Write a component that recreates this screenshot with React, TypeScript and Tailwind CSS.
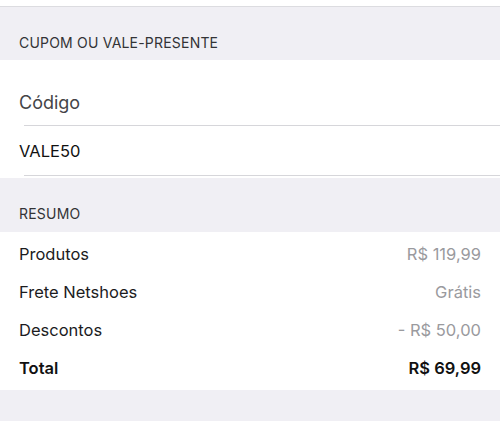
import React from "react";

const font = { fontFamily: "Inter, 'Noto Sans', sans-serif" };

function Row({ label, value, bold }: { label: string; value: string; bold?: boolean }) {
  return (
    <div className="flex h-[38px] items-center justify-between pl-[19px] pr-[19px]">
      <span className={`text-[16.5px] leading-6 ${bold ? "font-semibold text-[#111]" : "text-[#1c1c1e]"}`}>{label}</span>
      <span className={`text-[16.5px] leading-6 ${bold ? "font-semibold text-[#111]" : "text-[#9a9a9e]"}`}>{value}</span>
    </div>
  );
}

export default function App() {
  return (
    <div className="w-[500px] h-[421px] bg-[#f0eff4] overflow-hidden" style={font}>
      <div className="h-[6px] bg-white" />
      <div className="h-px bg-[#dcdce0]" />
      <div className="h-[53px] flex items-end pb-[7px] pl-[19px]">
        <span className="text-[14px] leading-5 text-[#333336] tracking-[0.2px]">CUPOM OU VALE-PRESENTE</span>
      </div>
      <div className="bg-white">
        <div className="h-[65px] flex items-end pb-[10px] pl-[19px]">
          <span className="text-[18px] leading-6 text-[#444447]">Código</span>
        </div>
        <div className="ml-[24px] h-px bg-[#d6d6da]" />
        <div className="h-[49px] flex items-center pl-[19px]">
          <span className="text-[16.5px] leading-6 text-[#111]">VALE50</span>
        </div>
        <div className="ml-[24px] h-px bg-[#d6d6da]" />
        <div className="h-[2px]" />
      </div>
      <div className="h-[54px] flex items-end pb-[8px] pl-[19px]">
        <span className="text-[14px] leading-5 text-[#333336] tracking-[0.2px]">RESUMO</span>
      </div>
      <div className="bg-white py-[3px]">
        <Row label="Produtos" value="R$ 119,99" />
        <Row label="Frete Netshoes" value="Grátis" />
        <Row label="Descontos" value="- R$ 50,00" />
        <Row label="Total" value="R$ 69,99" bold />
      </div>
    </div>
  );
}
